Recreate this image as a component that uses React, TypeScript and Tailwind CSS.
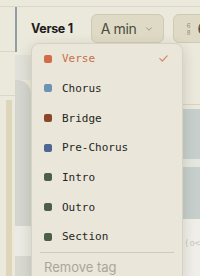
import { ChevronDown } from "lucide-react";

const TAGS = [
  { name: "Verse", color: "#d26b47", active: true },
  { name: "Chorus", color: "#6d94b6" },
  { name: "Bridge", color: "#8a472c" },
  { name: "Pre-Chorus", color: "#4d6792" },
  { name: "Intro", color: "#4b5f48" },
  { name: "Outro", color: "#4b5f48" },
  { name: "Section", color: "#4b5f48" },
];

function TagMenu() {
  return (
    <div className="absolute left-[31px] top-[43px] w-[152px] rounded-[8px] border border-[#d7d3c3] bg-[#eae7da] shadow-[0_4px_14px_rgba(60,55,40,0.18)]">
      {TAGS.map((t) => (
        <div key={t.name} className="flex h-[29.67px] items-center pl-[12px] pr-[14px]">
          <span className="h-[8px] w-[8px] shrink-0 rounded-[2px]" style={{ backgroundColor: t.color }} />
          <span
            className={
              "ml-[10px] flex-1 font-['DejaVu_Sans_Mono',monospace] text-[11px] leading-none " +
              (t.active ? "text-[#c96d4b]" : "text-[#262522]")
            }
          >
            {t.name}
          </span>
          {t.active && (
            <svg width="9" height="7" viewBox="0 0 9 7" fill="none">
              <path d="M0.8 3.6 L3.3 6 L8.2 0.8" stroke="#d4896c" strokeWidth="1.2" strokeLinecap="round" strokeLinejoin="round" />
            </svg>
          )}
        </div>
      ))}
      <div className="mx-[8px] border-t border-[#cfcbbb]" />
      <div className="flex h-[30px] items-center pl-[12px] text-[13px] text-[#a9a698]">Remove tag</div>
    </div>
  );
}

export default function App() {
  return (
    <div className="relative h-[276px] w-[200px] overflow-hidden bg-[#ebe8dc] font-['Inter',sans-serif]">
      <div className="h-[7px] border-b border-[#dad6c8]" />

      {/* section header */}
      <div className="flex h-[45px]">
        <div className="w-[15px] shrink-0 border-b border-[#dad6c8]" />
        <div className="w-[2px] shrink-0 bg-[#8f9ea4]" />
        <div className="flex min-w-0 flex-1 items-start pl-[14px] pt-[7px]">
          <span className="mt-[9px] shrink-0 whitespace-nowrap text-[12.5px] font-bold leading-none tracking-tight text-[#1d1d1b]">
            Verse 1
          </span>
          <div className="ml-[18px] flex h-[29px] w-[73px] shrink-0 items-center rounded-[6px] border border-[#cfcab3] bg-[#dedac5] pl-[9px]">
            <span className="whitespace-nowrap text-[14px] leading-none tracking-tight text-[#4b4a3d]">A min</span>
            <ChevronDown className="ml-[7px] h-[10px] w-[10px] text-[#8b8a78]" strokeWidth={2} />
          </div>
          <div className="ml-[9px] flex h-[29px] w-[60px] shrink-0 items-center rounded-[6px] border border-[#cfcab3] bg-[#dedac5] pl-[13px]">
            <div className="flex flex-col items-center text-[6px] leading-[7px] text-[#8b8a78]">
              <span>6</span>
              <span>8</span>
            </div>
            <span className="ml-[7px] text-[15px] leading-none text-[#4b4a3d]">6</span>
          </div>
        </div>
      </div>

      {/* lanes beneath */}
      <div className="flex h-[224px]">
        <div className="flex w-[15px] shrink-0 flex-col">
          <div className="h-[44px] border-b border-[#dad6c8]" />
          <div className="ml-[6px] mt-[4px] w-[6px] flex-1 bg-[#ddd6ba]" />
        </div>
        <div className="flex w-[16px] shrink-0 flex-col pt-[3px]">
          <div className="h-[25px] bg-[#e1e1d9]" />
          <div className="h-[146px] rounded-tr-[14px] bg-[#d4d5cf]" />
          <div className="h-[30px] bg-[#ecebe3]" />
          <div className="flex-1 bg-[#d9d9d2]" />
        </div>
        <div className="flex-1" />
        <div className="flex w-[17px] shrink-0 flex-col">
          <div className="h-[53px] border-b border-[#d7d4c6]" />
          <div className="mt-[4px] h-[50px] bg-[#c6cfcc]" />
          <div className="h-[8px] bg-[#e4e6e0]" />
          <div className="h-[52px] bg-[#c6cfcc]" />
          <div className="flex-1 bg-[#efeee8] pl-[1px] pt-[18px] font-['DejaVu_Sans_Mono',monospace] text-[9px] text-[#c9c8bf]">
            (o&lt;
          </div>
        </div>
      </div>

      <TagMenu />
    </div>
  );
}
